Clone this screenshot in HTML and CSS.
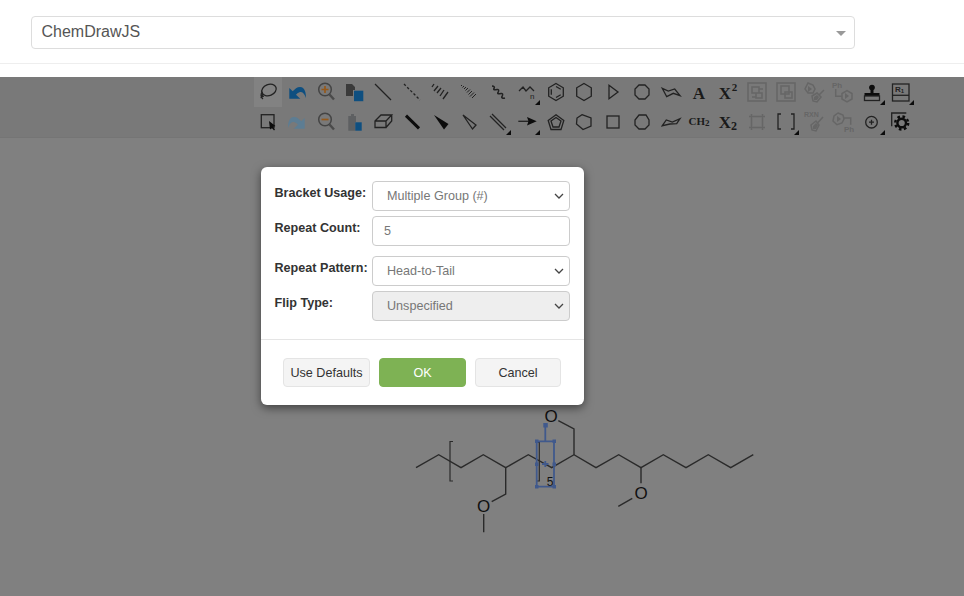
FILE: index.html
```html
<!DOCTYPE html>
<html lang="en">
<head>
<meta charset="utf-8">
<title>ChemDrawJS</title>
<link rel="stylesheet" href="styles.css">
</head>
<body>
<svg class="defs" width="0" height="0" aria-hidden="true"><defs>
<polygon id="corner" points="13,8 13,13 8,13"/>
<polygon id="hexring" points="0,-8.500 7.300,-4.200 7.300,4.200 0,8.500 -7.300,4.200 -7.300,-4.200"/>
</defs></svg>

<header class="top">
  <div class="picker"><span class="picker-text">ChemDrawJS</span><span class="picker-arrow"></span></div>
</header>

<main class="workspace">
  <div class="toolbar">
    <button class="tool tool-active"><svg viewBox="-14 -15 28 30"><ellipse class="s" cx="1" cy="-2" rx="7.500" ry="5.500" transform="rotate(-22 1 -2)"/><path class="s" d="M-5.500 0C-7.500 2-7.500 5-5 7M-5 2-6.500 5-4 4"/></svg></button>
    <button class="tool"><svg viewBox="-14 -15 28 30"><path class="blue" d="M-7.700-4V6.700H3.300L-1 2.700C1 .5 3 0 4 0 6 0 8 3 9 6 9 1 8-5 3-5 0-5-2-3-4.300-.7Z"/></svg></button>
    <button class="tool"><svg viewBox="-14 -15 28 30"><circle class="zoomc" cx="0" cy="-2.500" r="6.300"/><path class="orange" d="M-3.500-2.500H3.500M0-6V1"/><path class="handle" d="M4.500 2.500 9 7.500"/></svg></button>
    <button class="tool"><svg viewBox="-14 -15 28 30"><path class="fill-dark" d="M-8-8H-2L1-5V-2H-1V4H-8Z"/><rect class="blue" x="0" y="-1.300" width="9.300" height="10.500"/></svg></button>
    <button class="tool"><svg viewBox="-14 -15 28 30"><path class="s" d="M-8-8 8 8"/></svg></button>
    <button class="tool"><svg viewBox="-14 -15 28 30"><path class="s dash" d="M-8-8 8 8"/></svg></button>
    <button class="tool"><svg viewBox="-14 -15 28 30"><path class="s" d="M-6-8-8-5M-2-6-6-1M1-4-3 1M4-2 0 4M8 0 3 7"/></svg></button>
    <button class="tool"><svg viewBox="-14 -15 28 30"><path class="thin" d="M-7-7-8-6M-5-6-6.500-4.500M-3-5-5-3M-1-4-3.500-1.500M1-2.500-2 .5M3-1-.5 2.500M5 .5 1 4.500M7 2 3 6"/></svg></button>
    <button class="tool"><svg viewBox="-14 -15 28 30"><path class="w" d="M-6-6C-4-6-3-5-4-3.500S-3-2-1-2.500 1-1 0 .5 1 2 3 1.500 5 3 4 4.500 5 6.500 7 6"/></svg></button>
    <button class="tool"><svg viewBox="-14 -15 28 30"><path class="s" d="M-8-1-4-5-1-1 3-5 7-1"/><text class="tiny" x="3" y="6.500">n</text><use href="#corner"/></svg></button>
    <button class="tool"><svg viewBox="-14 -15 28 30"><use class="s" href="#hexring"/><path class="s" d="M0-5.500 4.700-2.700M4.700 2.700 0 5.500M-4.700 2.700V-2.700"/></svg></button>
    <button class="tool"><svg viewBox="-14 -15 28 30"><use class="s" href="#hexring"/></svg></button>
    <button class="tool"><svg viewBox="-14 -15 28 30"><path class="s" d="M-4-6.700 5 0-4 6.700Z"/></svg></button>
    <button class="tool"><svg viewBox="-14 -15 28 30"><path class="s" d="M-3-7 3-7 7-3 7 3 3 7-3 7-7 3-7-3Z"/></svg></button>
    <button class="tool"><svg viewBox="-14 -15 28 30"><path class="s" d="M-8.700-3.700-2.700-1 3.700-3 9 3.700 2.300 1.300-4.300 4.700Z"/></svg></button>
    <button class="tool"><svg viewBox="-14 -15 28 30"><text class="serif big" x="0" y="6.500">A</text></svg></button>
    <button class="tool"><svg viewBox="-14 -15 28 30"><text class="serif big" x="-3" y="6.500">X</text><text class="serif sup" x="6.500" y="-1.300">2</text></svg></button>
    <button class="tool"><svg viewBox="-14 -15 28 30"><path class="off" d="M-9-9H9V9H-9ZM-5-5H2V1H-5ZM-1 1H5V6H-1ZM2-3H6M-5 5H-1"/></svg></button>
    <button class="tool"><svg viewBox="-14 -15 28 30"><path class="off" d="M-9-9H9V9H-9ZM-5-6H3V2H-5ZM-1 0H6V6H-1Z"/></svg></button>
    <button class="tool"><svg viewBox="-14 -15 28 30"><path class="off" d="M-6-9-1-7 1-3-1 1-6 1-9-3Z"/><path class="offfill" d="M-6-6-2-3-6 0Z"/><path class="off" d="M-2 4 3 1 7 5 3 10-1 9ZM5 3 10-2"/><path class="offfill" d="M0 5 3 3 5 5 3 8 0 8Z"/></svg></button>
    <button class="tool"><svg viewBox="-14 -15 28 30"><text class="tiny offtext" x="-11" y="-4">Ph</text><path class="off" d="M-7.300-3V4.300H-1M4-1.300 9 1.500V7L4 10-1 7V1.500Z"/><path class="offfill" d="M2 1 6 4 2 7Z"/></svg></button>
    <button class="tool"><svg viewBox="-14 -15 28 30"><path class="fill-ink" d="M-1.500-2C-4-3.500-3-7.300 0-7.300S4-3.500 1.500-2V1H7.500V4H-7.500V1H-1.500Z"/><rect class="s" x="-7.500" y="4" width="15" height="4.500"/><use href="#corner"/></svg></button>
    <button class="tool"><svg viewBox="-14 -15 28 30"><rect class="s" x="-8.500" y="-8" width="16.500" height="17"/><path class="s" d="M-8.500 3.300H8"/><text class="tiny boldt" x="-6" y="0">R<tspan class="tinysub" dy="1">1</tspan></text><use href="#corner"/></svg></button>

    <button class="tool"><svg viewBox="-14 -15 28 30"><rect class="s" x="-6.700" y="-7.300" width="12.700" height="13"/><path class="fill-ink" d="M1-1 7.500 4 5 5 7 7.500 6 8.500 4 6 2 7.500Z"/></svg></button>
    <button class="tool"><svg viewBox="-14 -15 28 30"><path class="ltblue" transform="scale(-1 1)" d="M-7.700-4V6.700H3.300L-1 2.700C1 .5 3 0 4 0 6 0 8 3 9 6 9 1 8-5 3-5 0-5-2-3-4.300-.7Z"/></svg></button>
    <button class="tool"><svg viewBox="-14 -15 28 30"><circle class="zoomc" cx="0" cy="-2.500" r="6.300"/><path class="orange" d="M-3.500-2.500H3.500"/><path class="handle" d="M4.500 2.500 9 7.500"/></svg></button>
    <button class="tool"><svg viewBox="-14 -15 28 30"><path class="offfill2" d="M-5.700-6H-3V-8H0V-6H2V0H1.300V8.700H-5.700Z"/><rect class="blue" x="1.300" y=".3" width="6.400" height="8.400"/></svg></button>
    <button class="tool"><svg viewBox="-14 -15 28 30"><path class="s" d="M-8-1-2-7H8.700L3-1V5.500H-8ZM-8-1H3M3 5.500 8.700-1V-7"/></svg></button>
    <button class="tool"><svg viewBox="-14 -15 28 30"><path class="bold" d="M-6-6.300 7 6.300"/></svg></button>
    <button class="tool"><svg viewBox="-14 -15 28 30"><path class="fill-ink" d="M-6-7 8.500 2 4 7.500Z"/></svg></button>
    <button class="tool"><svg viewBox="-14 -15 28 30"><path class="s" d="M-6-7 7 3 3.500 7Z"/></svg></button>
    <button class="tool"><svg viewBox="-14 -15 28 30"><path class="s" d="M-8-6 6 8M-6-8 8 6"/><use href="#corner"/></svg></button>
    <button class="tool"><svg viewBox="-14 -15 28 30"><path class="s" d="M-8.700-.7H2"/><path class="fill-ink" d="M0-5 9.700-.7 0 3.500 1.500-.7Z"/><use href="#corner"/></svg></button>
    <button class="tool"><svg viewBox="-14 -15 28 30"><path class="s" d="M0-7.300 7.800-1.500 5 7.500H-5L-7.800-1.500Z"/><path class="s" d="M0-4.500 5-1 3 5H-3L-5-1Z"/></svg></button>
    <button class="tool"><svg viewBox="-14 -15 28 30"><path class="s" d="M-2-7.300 7-4 7 4-1 7.500-7.500 2-7-4Z"/></svg></button>
    <button class="tool"><svg viewBox="-14 -15 28 30"><rect class="s" x="-6" y="-6" width="12" height="12"/></svg></button>
    <button class="tool"><svg viewBox="-14 -15 28 30"><path class="s" d="M-3-7 4-7 7-2 7 3 3 7-3 7-7 3-7-2Z"/></svg></button>
    <button class="tool"><svg viewBox="-14 -15 28 30"><path class="s" d="M-8.700 3.700-4.700-2 1.300 0 9-3.300 5.700 1.700-1 2Z"/></svg></button>
    <button class="tool"><svg viewBox="-14 -15 28 30"><text class="serif ch" x="0" y="3.300">CH<tspan class="chsub" dy="1">2</tspan></text></svg></button>
    <button class="tool"><svg viewBox="-14 -15 28 30"><text class="serif big" x="-3" y="5.500">X</text><text class="serif sub" x="6" y="7.700">2</text></svg></button>
    <button class="tool"><svg viewBox="-14 -15 28 30"><path class="off" d="M-5.500-5.500H5.500V5.500H-5.500ZM-8-5.500H-4M-8 5.500H-4M4-5.500H8M4 5.500H8M-5.500-8V-4M-5.500 4V8M5.500-8V-4M5.500 4V8"/></svg></button>
    <button class="tool"><svg viewBox="-14 -15 28 30"><path class="s" d="M-5-8H-8V7H-5M5-8H8V7H5"/><use href="#corner"/></svg></button>
    <button class="tool"><svg viewBox="-14 -15 28 30"><text class="tiny offtext rxn" x="-10" y="-4.700">RXN</text><path class="off" d="M-3 3 2-1 5 3 2 9-2 8ZM3.500 1 9-5"/><path class="offfill" d="M-1 4 2 1 4 3 2 7-1 7Z"/></svg></button>
    <button class="tool"><svg viewBox="-14 -15 28 30"><path class="off" d="M-5-9 0-7 1-3-1 1-6 2.700-10-1-9-6ZM1-4H7.700V2.700"/><path class="offfill" d="M-6-6-2-3-6 0Z"/><text class="tiny offtext" x="1" y="9.500">Ph</text></svg></button>
    <button class="tool"><svg viewBox="-14 -15 28 30"><circle class="s" cx="-.5" cy=".2" r="5.800"/><path class="s" d="M-3 .2H2M-.5-2.300V2.700"/><use href="#corner"/></svg></button>
    <button class="tool"><svg viewBox="-14 -15 28 30"><path class="s" d="M-9.300 4.300V-9H5.300"/><circle class="gear-teeth" cx=".7" cy="1" r="6.500"/><circle class="gear" cx=".7" cy="1" r="4.300"/></svg></button>
  </div>

  <svg class="molecule" viewBox="0 137 964 459">
    <path class="bond" d="M416 467.700 438.700 454.700 461 467.700 483.300 454.700 505.700 467.700 528.300 454.700 551.700 467.700 574 454.700 596 467.700 618.700 454.700 641 467.700 663.300 454.700 686 467.700 708.300 454.700 730.700 467.700 753.300 454.700"/>
    <path class="bond" d="M505.700 467.700V494L491.700 501.700M483.700 514V532.300M574 454.700V429L558.300 420.700M641 467.700V483.300M632.300 498.300 618.300 506.300"/>
    <path class="bracket" d="M453 441.500H450V481H453M536.500 442.500H539.300V481H536.500"/>
    <text class="atom" x="551" y="421.800">O</text>
    <text class="atom" x="483.700" y="512.300">O</text>
    <text class="atom" x="641" y="499.300">O</text>
    <text class="count" x="550" y="486">5</text>
    <path class="sel" d="M536.700 441.300H554V486.700H536.700ZM545.300 425V441.300M542 464H548.500M545.300 461V467"/>
    <path class="sel-h" d="M535 439.500h3.500v3.500h-3.500zM552.500 439.500h3.500v3.500h-3.500zM535 485h3.500v3.500h-3.500zM552.500 485h3.500v3.500h-3.500zM535 462.500h3.500v3.500h-3.500zM552.500 462.500h3.500v3.500h-3.500zM543.300 423h4.500v4.500h-4.500z"/>
  </svg>
</main>

<section class="dialog">
  <form class="dialog-form">
    <div class="row"><label class="row-label">Bracket Usage:</label><select class="field field-select"><option>Multiple Group (#)</option></select></div>
    <div class="row"><label class="row-label">Repeat Count:</label><input class="field field-input" value="5"></div>
    <div class="row row-far"><label class="row-label">Repeat Pattern:</label><select class="field field-select"><option>Head-to-Tail</option></select></div>
    <div class="row"><label class="row-label">Flip Type:</label><select class="field field-select" disabled><option>Unspecified</option></select></div>
  </form>
  <footer class="dialog-foot">
    <button class="btn">Use Defaults</button>
    <button class="btn btn-ok">OK</button>
    <button class="btn btn-narrow">Cancel</button>
  </footer>
</section>
</body>
</html>
```

FILE: styles.css
```css
* { box-sizing: border-box; }
html, body { margin: 0; height: 100%; }
body {
  width: 964px;
  height: 596px;
  overflow: hidden;
  display: flex;
  flex-direction: column;
  background: #fff;
  font-family: "Liberation Sans", Arial, sans-serif;
}
.defs { display: block; height: 0; }

.top { height: 77px; padding: 16px 109px 0 31px; flex: none; position: relative; }
.top::after { content: ""; position: absolute; left: 0; right: 0; top: 63px; height: 1px; background: #eee; }
.picker {
  height: 33px;
  border: 1px solid #ddd;
  border-radius: 4px;
  display: flex;
  align-items: center;
  justify-content: space-between;
  padding: 0 8px 0 9.500px;
}
.picker-text { font-size: 16px; color: #555; position: relative; top: -1px; }
.picker-arrow {
  width: 0; height: 0;
  border-left: 5px solid transparent;
  border-right: 5px solid transparent;
  border-top: 5px solid #999;
  position: relative; top: 1px;
}

.workspace { flex: 1; background: #808080; display: flex; flex-direction: column; }
.toolbar {
  height: 60px;
  flex: none;
  padding-left: 253.500px;
  background: #797979;
  box-shadow: 0 1px 0 #757575;
  display: grid;
  grid-template-columns: repeat(23, 28.77px);
  grid-template-rows: 30px 30px;
}
.tool { border: 0; padding: 0; background: none; display: flex; justify-content: center; align-items: center; }
.tool svg { width: 28px; height: 30px; display: block; fill: #0c0c0c; overflow: visible; }
.tool-active { background: #828282; }

.s, .thin, .w, .off, .bold, .handle, .orange, .zoomc { fill: none; }
.s { stroke: #222; stroke-width: 1.300; }
.w { stroke: #222; stroke-width: 1.500; }
.thin { stroke: #222; stroke-width: 1; }
.dash { stroke-dasharray: 2.500 2; }
.bold { stroke: #0c0c0c; stroke-width: 3; }
.off { stroke: #666; stroke-width: 1.500; }
.offfill { fill: #666; }
.offfill2 { fill: #5e6062; }
.blue { fill: #0e4f80; }
.ltblue { fill: #5d7d93; }
.fill-dark { fill: #3a3a3a; }
.fill-ink { fill: #0c0c0c; }
.zoomc { stroke: #444; stroke-width: 1.500; }
.handle { stroke: #4a4a4a; stroke-width: 2.400; }
.orange { stroke: #96591a; stroke-width: 1.700; }
.gear { fill: #797979; stroke: #0c0c0c; stroke-width: 2.400; }
.gear-teeth { fill: none; stroke: #0c0c0c; stroke-width: 2.400; stroke-dasharray: 2.600 2.500; }

.tool text { font-family: "Liberation Serif", serif; }
.tool .tiny { font-family: "Liberation Sans", sans-serif; font-size: 8px; fill: #222; }
.tool .offtext { fill: #666; font-weight: 700; }
.tool .rxn { font-size: 7px; }
.tool .boldt { font-weight: 700; fill: #222; }
.tinysub { font-size: 6px; }
.serif { font-weight: 700; text-anchor: middle; fill: #1a1a1a; }
.big { font-size: 17px; }
.sup { font-size: 11px; }
.sub { font-size: 12px; }
.ch { font-size: 11px; }
.chsub { font-size: 9px; }

.molecule { flex: 1; width: 964px; display: block; }
.bond { fill: none; stroke: #2a2a2a; stroke-width: 1.400; }
.bracket { fill: none; stroke: #2a2a2a; stroke-width: 1.200; }
.atom { font-size: 17px; text-anchor: middle; fill: #111; }
.count { font-size: 12px; text-anchor: middle; fill: #111; }
.sel { fill: none; stroke: #40598c; stroke-width: 1.800; }
.sel-h { fill: #40598c; }

.dialog {
  position: absolute;
  left: 261px;
  top: 167px;
  width: 323px;
  height: 238px;
  background: #fff;
  border-radius: 6px;
  box-shadow: 0 3px 10px rgba(0, 0, 0, .5);
  display: flex;
  flex-direction: column;
}
.dialog-form { padding: 14px 14px 0 13.500px; height: 172px; display: flex; flex-direction: column; gap: 5px; }
.row { display: grid; grid-template-columns: 97.500px 198px; height: 30px; }
.row-far { margin-top: 5px; }
.row-label { font-size: 12.600px; font-weight: 700; color: #333; line-height: 25px; white-space: nowrap; }
.field {
  width: 198px;
  height: 30px;
  font-family: inherit;
  font-size: 12.600px;
  line-height: 28px;
  color: #777;
  background-color: #fff;
  border: 1px solid #ccc;
  border-radius: 4px;
  padding: 0 6px 2px 10px;
}
.field-select {
  appearance: none;
  padding-left: 14px;
  background-image: url("data:image/svg+xml,%3Csvg xmlns='http://www.w3.org/2000/svg' width='10' height='6'%3E%3Cpath d='M1 1 5 5 9 1' fill='none' stroke='%23444' stroke-width='1.300'/%3E%3C/svg%3E");
  background-repeat: no-repeat;
  background-position: right 5px center;
}
.field-input { padding: 0 11px 1px; }
.field:disabled { background-color: #eee; opacity: 1; color: #777; }

.dialog-foot {
  flex: 1;
  border-top: 1px solid #e5e5e5;
  padding: 18px 0 0 22px;
  display: flex;
  align-items: flex-start;
  gap: 9px;
}
.btn {
  width: 87px;
  height: 29px;
  font-family: inherit;
  font-size: 12.600px;
  color: #333;
  background: #f4f4f4;
  border: 1px solid #e4e4e4;
  border-radius: 4px;
  padding: 0;
}
.btn-narrow { width: 86px; }
.btn-ok { background: #7eb254; border-color: #7eb254; color: #fff; }
```
